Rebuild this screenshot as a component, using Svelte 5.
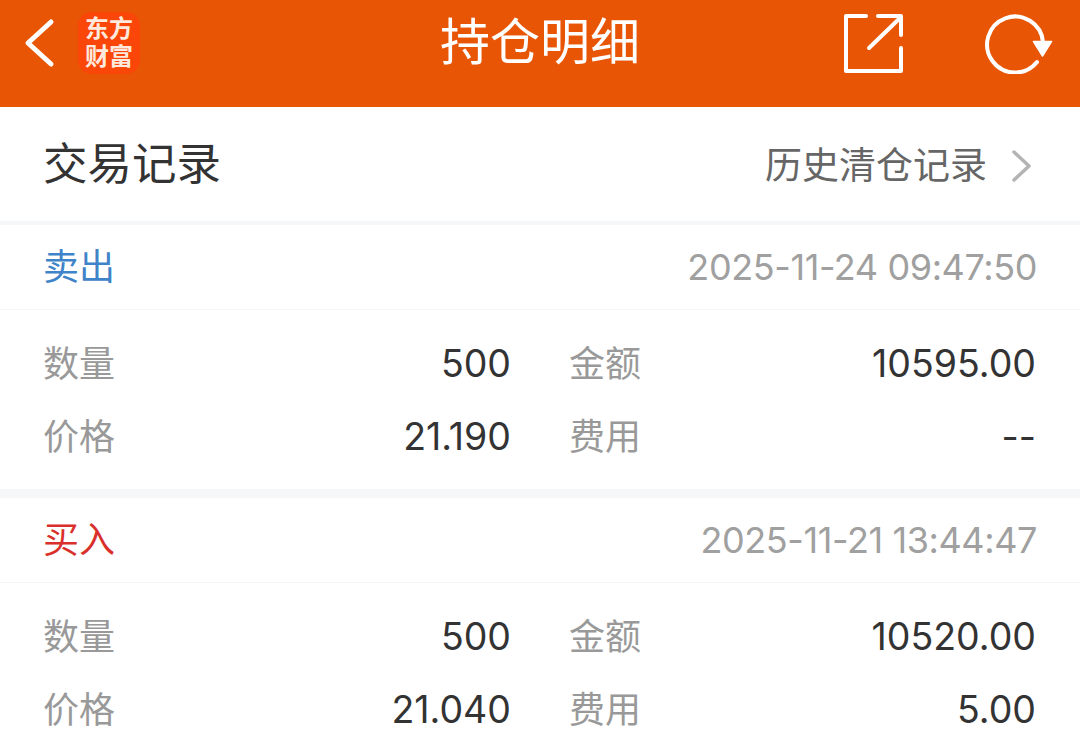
<script>
  const trades = [
    {
      side: "卖出",
      kind: "sell",
      time: "2025-11-24 09:47:50",
      qty: "500",
      amount: "10595.00",
      price: "21.190",
      fee: "--",
    },
    {
      side: "买入",
      kind: "buy",
      time: "2025-11-21 13:44:47",
      qty: "500",
      amount: "10520.00",
      price: "21.040",
      fee: "5.00",
    },
  ];
</script>

<div class="page">
  <header class="topbar">
    <div class="left">
      <svg class="back" width="34" height="52" viewBox="0 0 34 52">
        <path d="M28 4 L5 25 L28 46" fill="none" stroke="#fff" stroke-width="5" stroke-linecap="round" stroke-linejoin="round" />
      </svg>
      <div class="logo">东方<br />财富</div>
    </div>
    <h1>持仓明细</h1>
    <div class="right">
      <svg width="62" height="62" viewBox="0 0 62 62">
        <path d="M23 4 H3 V59 H58 V36" fill="none" stroke="#fff" stroke-width="4" stroke-linecap="round" stroke-linejoin="round" />
        <path d="M26 36 L57 6 M35 4 H58 V23" fill="none" stroke="#fff" stroke-width="4" stroke-linecap="round" stroke-linejoin="round" />
      </svg>
      <svg width="70" height="62" viewBox="0 0 70 62">
        <path d="M53 50 A28 28 0 1 1 59 30" fill="none" stroke="#fff" stroke-width="4" stroke-linecap="round" />
        <path d="M49.5 29.5 H67.5 L58.5 44 Z" fill="#fff" stroke="#fff" stroke-width="1.5" stroke-linejoin="round" />
      </svg>
    </div>
  </header>

  <section class="title-row">
    <h2>交易记录</h2>
    <div class="history">
      <span>历史清仓记录</span>
      <svg class="more" width="20" height="32" viewBox="0 0 20 32">
        <path d="M2 2 L17 16 L2 30" fill="none" stroke="#b4b4b4" stroke-width="3.5" stroke-linecap="round" stroke-linejoin="round" />
      </svg>
    </div>
  </section>

  {#each trades as t}
    <section class="trade">
      <div class="trade-head">
        <span class="side {t.kind}">{t.side}</span>
        <span class="time">{t.time}</span>
      </div>
      <div class="grid">
        <span class="label">数量</span>
        <span class="value">{t.qty}</span>
        <span class="label">金额</span>
        <span class="value">{t.amount}</span>
        <span class="label">价格</span>
        <span class="value">{t.price}</span>
        <span class="label">费用</span>
        <span class="value">{t.fee}</span>
      </div>
    </section>
  {/each}
</div>

<style>
  :global(body) {
    margin: 0;
    background: #fff;
  }

  .page {
    width: 1080px;
    height: 755px;
    overflow: hidden;
    font-family: Inter, "Noto Sans CJK SC", sans-serif;
    background: #f6f7f9;
  }

  .topbar {
    height: 107px;
    background: #e85504;
    display: grid;
    grid-template-columns: 1fr auto 1fr;
    align-items: center;
    color: #fff;
  }

  .left {
    display: flex;
    align-items: center;
    gap: 21px;
    padding-left: 23px;
  }

  .back {
    margin-top: -19px;
  }

  .logo {
    width: 62px;
    height: 62px;
    margin-top: -21px;
    border-radius: 14px;
    background: #fa4608;
    font-size: 24px;
    line-height: 28px;
    font-weight: 700;
    text-align: center;
    padding-top: 3px;
    box-sizing: border-box;
    color: #ffe9dc;
  }

  h1 {
    margin: -24px 0 0;
    font-size: 50px;
    line-height: 72px;
    font-weight: 400;
  }

  .right {
    display: flex;
    justify-content: flex-end;
    align-items: center;
    gap: 79px;
    padding-right: 26px;
    margin-top: -22px;
  }

  .title-row {
    height: 114px;
    background: #fff;
    display: flex;
    justify-content: space-between;
    align-items: center;
    padding: 0 48px 0 43px;
    margin-bottom: 4px;
  }

  h2 {
    margin: 0;
    font-size: 44.5px;
    line-height: 1;
    font-weight: 400;
    color: #333;
  }

  .history {
    display: flex;
    align-items: center;
    gap: 25px;
    font-size: 37px;
    line-height: 1;
    color: #666;
    padding-top: 2px;
  }

  .more {
    margin-top: 2px;
  }

  .trade {
    background: #fff;
    margin-bottom: 9px;
  }

  .trade-head {
    height: 84px;
    display: flex;
    justify-content: space-between;
    align-items: center;
    padding: 0 43px;
    border-bottom: 1px solid #f5f5f5;
  }

  .side {
    font-size: 36px;
    line-height: 1;
  }

  .sell {
    color: #3f83c8;
  }

  .buy {
    color: #d9302c;
  }

  .time {
    font-size: 36px;
    letter-spacing: -0.4px;
    color: #a0a0a0;
  }

  .grid {
    height: 179px;
    display: grid;
    grid-template-columns: 127px 341px 200px 1fr;
    grid-auto-rows: 73px;
    align-items: center;
    align-content: start;
    padding: 17px 44px 0 43px;
    box-sizing: border-box;
  }

  .label {
    font-size: 36px;
    line-height: 1;
    color: #999;
  }

  .value {
    font-size: 37.5px;
    color: #333;
    text-align: right;
  }

  .label:nth-child(3),
  .label:nth-child(7) {
    padding-left: 58px;
  }
</style>
